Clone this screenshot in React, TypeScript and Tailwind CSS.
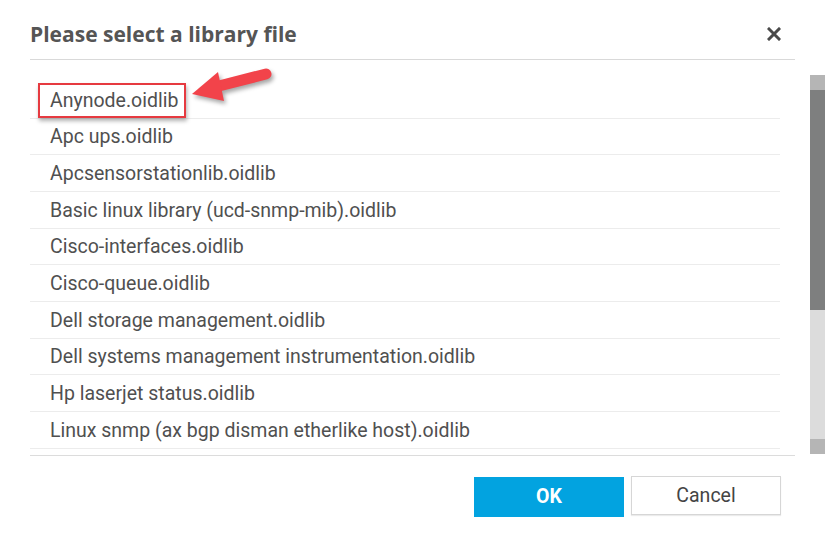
import { useState } from "react";

const files = [
  "Anynode.oidlib",
  "Apc ups.oidlib",
  "Apcsensorstationlib.oidlib",
  "Basic linux library (ucd-snmp-mib).oidlib",
  "Cisco-interfaces.oidlib",
  "Cisco-queue.oidlib",
  "Dell storage management.oidlib",
  "Dell systems management instrumentation.oidlib",
  "Hp laserjet status.oidlib",
  "Linux snmp (ax bgp disman etherlike host).oidlib",
];

function CloseIcon() {
  return (
    <svg width="14" height="14" viewBox="0 0 14 14" className="block">
      <path
        d="M2 2L12 12M12 2L2 12"
        stroke="#4a4a4a"
        strokeWidth="3"
        strokeLinecap="square"
      />
    </svg>
  );
}

function Arrow() {
  return (
    <svg
      width="100"
      height="55"
      viewBox="0 0 100 55"
      className="absolute left-[185px] top-[60px]"
      style={{ filter: "drop-shadow(2px 3px 2px rgba(0,0,0,0.35))" }}
    >
      <line
        x1="30"
        y1="27"
        x2="81"
        y2="14"
        stroke="#f2434a"
        strokeWidth="11"
        strokeLinecap="round"
      />
      <polygon points="7,34 33,12 39,41" fill="#f2434a" />
    </svg>
  );
}

export default function App() {
  const [selected, setSelected] = useState(0);

  return (
    <div className="relative w-[825px] h-[545px] bg-white overflow-hidden font-['Roboto',sans-serif]">
      <div className="ml-[30px] w-[765px] h-[60px] border-b border-[#d9d9d9] flex items-start justify-between">
        <h2 className="pt-[20px] text-[21px] leading-[28px] font-bold text-[#555] font-['Open_Sans',sans-serif]">
          Please select a library file
        </h2>
        <button className="mt-[27px] mr-[14px]">
          <CloseIcon />
        </button>
      </div>

      <div className="flex">
        <div className="ml-[30px] w-[765px] h-[396px] border-b border-[#dcdcdc] pt-[22px]">
          {files.map((file, i) => (
            <div
              key={file}
              onClick={() => setSelected(i)}
              className={`mr-[15px] h-[36.67px] border-b border-[#ececec] flex items-center pl-[20px] pt-[1px] text-[19.5px] text-[#505050] cursor-pointer ${
                selected === i ? "bg-white" : ""
              }`}
            >
              {file}
            </div>
          ))}
        </div>
        <div className="ml-[15px] mt-[15px] w-[15px] h-[379px] flex flex-col bg-[#dcdcdc]">
          <div className="h-[15px] bg-[#b5b5b5]" />
          <div className="h-[220px] bg-[#7e7f7f]" />
          <div className="flex-1" />
          <div className="h-[15px] bg-[#b5b5b5]" />
        </div>
      </div>

      <div className="ml-[30px] w-[765px] flex justify-end gap-[7px] pt-[20px] pr-[14px]">
        <button className="w-[150px] h-[40px] bg-[#02a3e0] text-white text-[19.5px] font-bold mt-[1px]">
          OK
        </button>
        <button className="w-[150px] h-[39px] bg-white border border-[#d6d6d6] shadow-[0_1px_1px_rgba(0,0,0,0.08)] text-[#444] text-[19.5px]">
          Cancel
        </button>
      </div>

      <div className="absolute left-[38px] top-[83px] w-[148px] h-[35px] border-2 border-[#e63a40] shadow-[1px_3px_4px_rgba(0,0,0,0.3)]" />
      <Arrow />
    </div>
  );
}
